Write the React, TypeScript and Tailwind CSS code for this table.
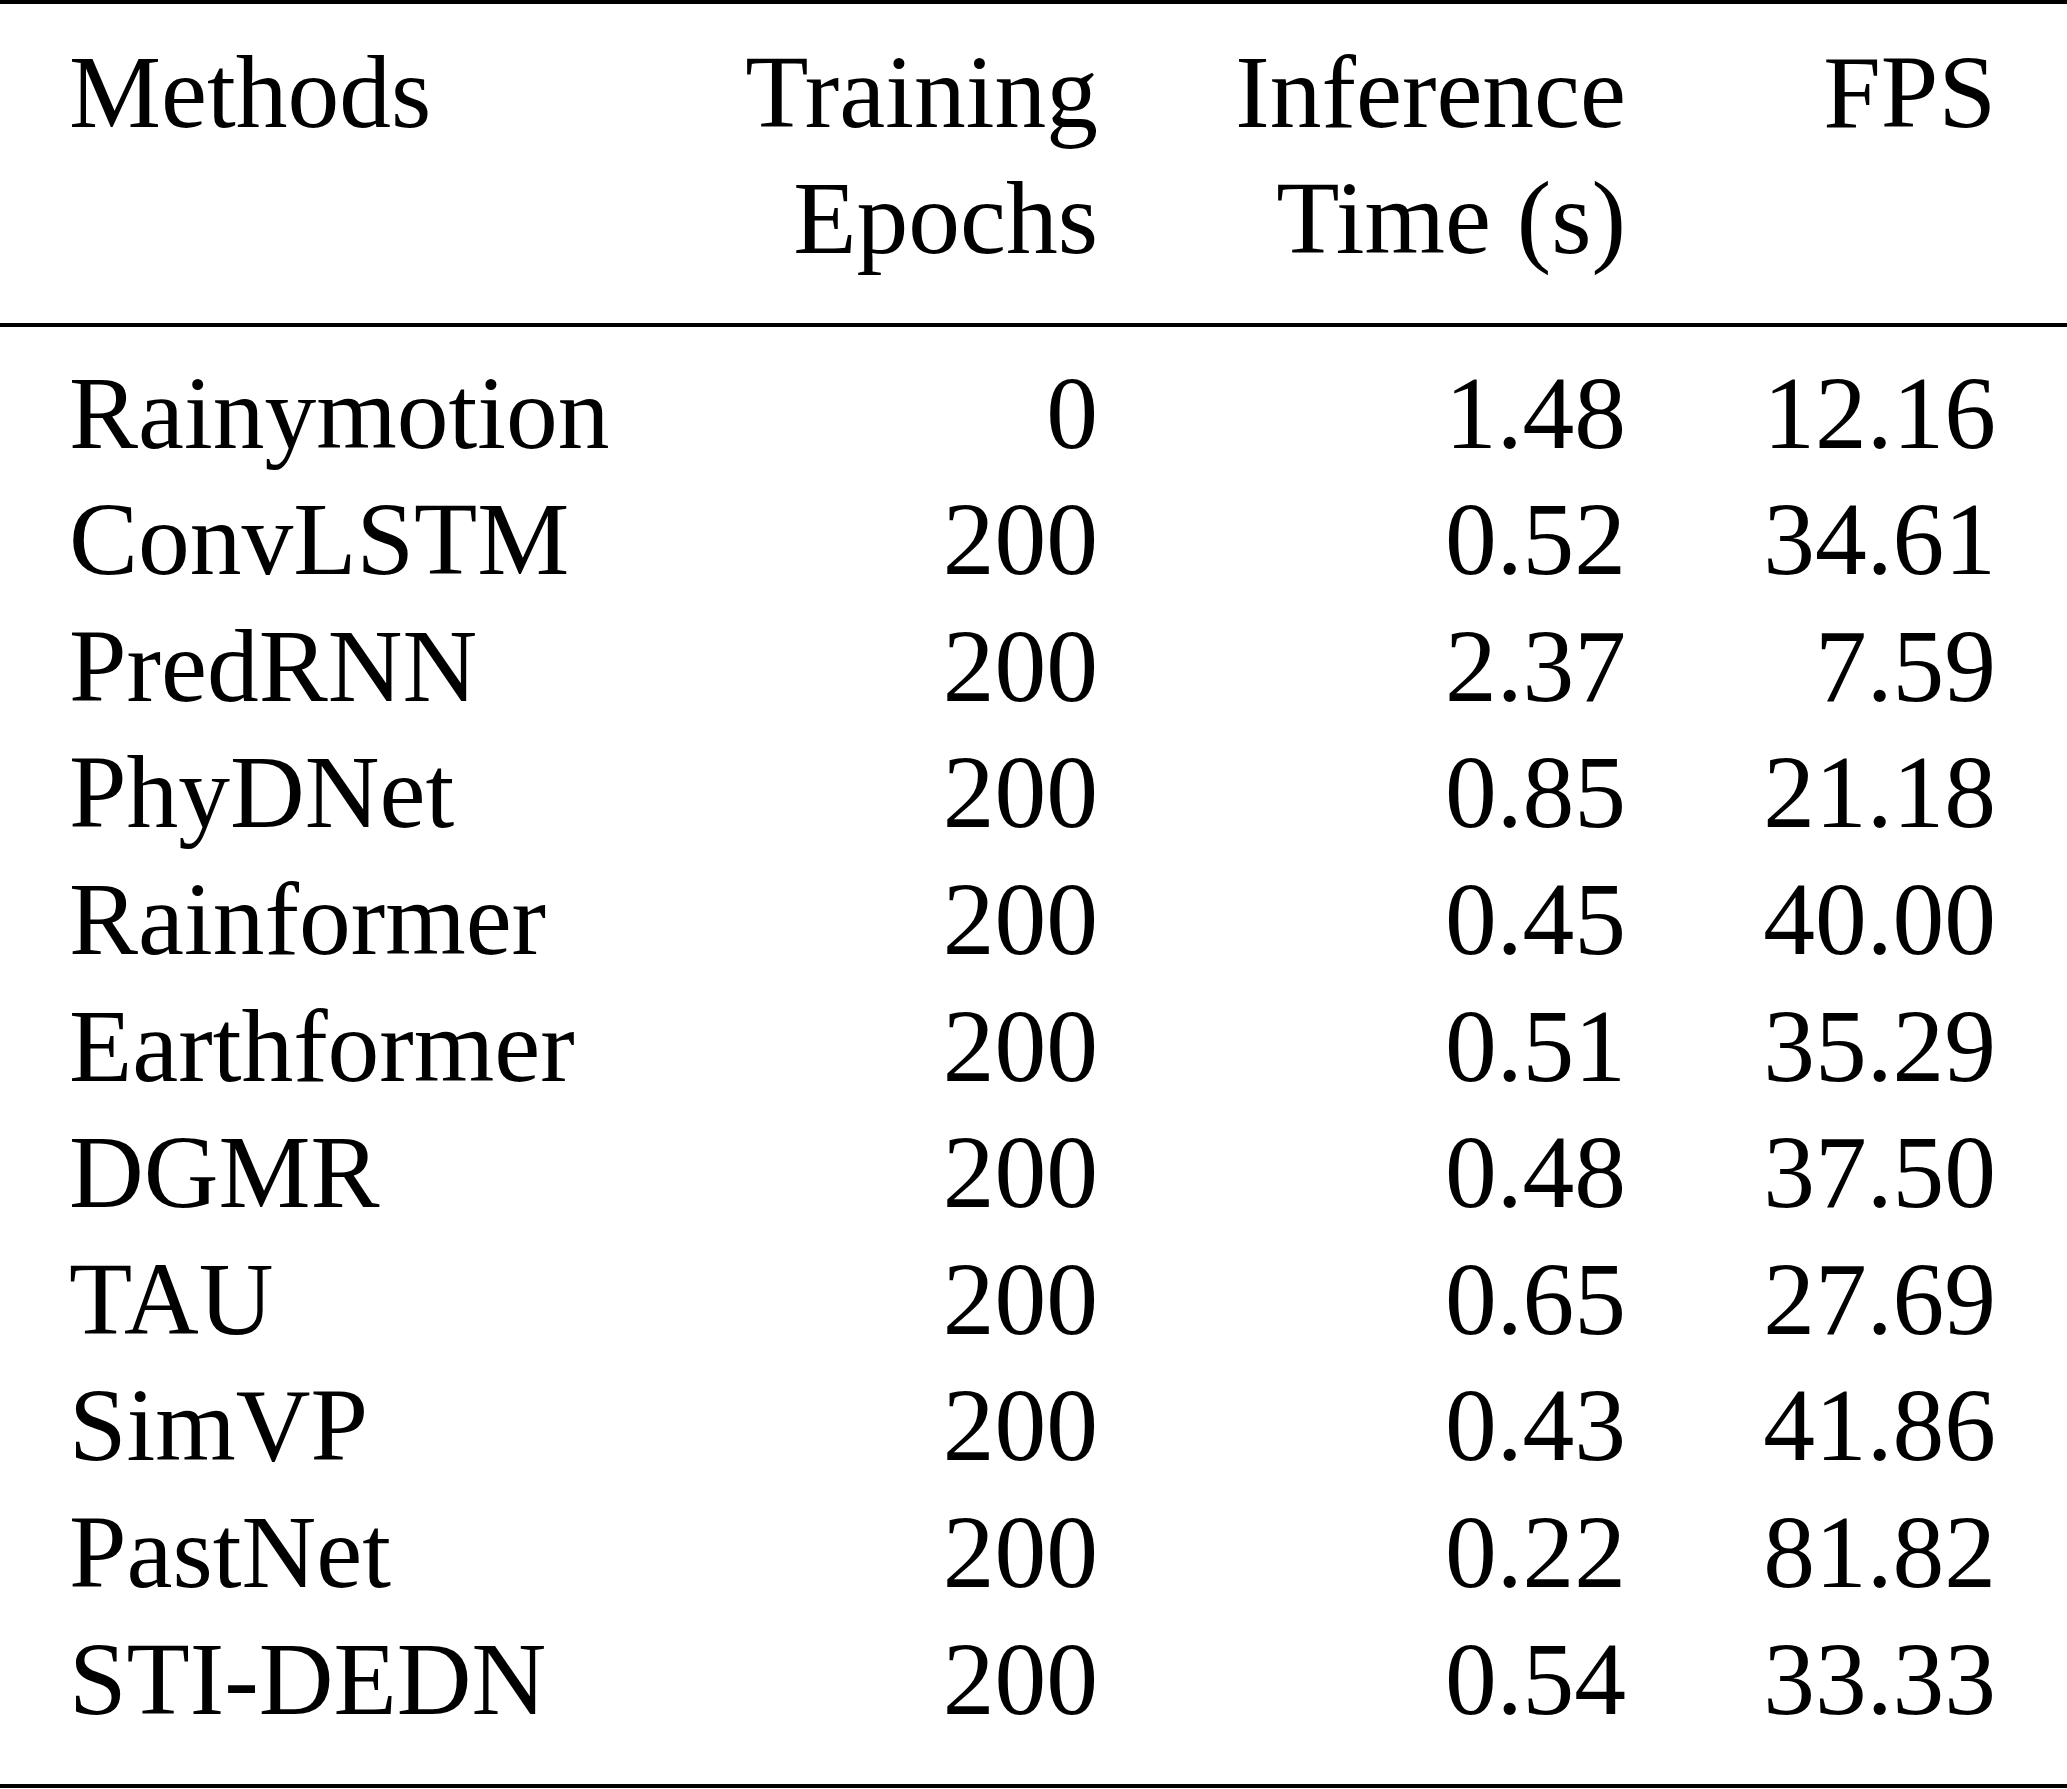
import React from "react";

const rows: [string, string, string, string][] = [
  ["Rainymotion", "0", "1.48", "12.16"],
  ["ConvLSTM", "200", "0.52", "34.61"],
  ["PredRNN", "200", "2.37", "7.59"],
  ["PhyDNet", "200", "0.85", "21.18"],
  ["Rainformer", "200", "0.45", "40.00"],
  ["Earthformer", "200", "0.51", "35.29"],
  ["DGMR", "200", "0.48", "37.50"],
  ["TAU", "200", "0.65", "27.69"],
  ["SimVP", "200", "0.43", "41.86"],
  ["PastNet", "200", "0.22", "81.82"],
  ["STI-DEDN", "200", "0.54", "33.33"],
];

const cols = "grid grid-cols-[600px_429px_528px_370px] pl-[69px]";

export default function App() {
  return (
    <div
      className="w-[2067px] h-[1789px] bg-white text-black text-[103.5px] leading-[126.6px]"
      style={{ fontFamily: '"Liberation Serif", "Times New Roman", serif' }}
    >
      <div className="h-[4px] bg-black" />
      <div className={`${cols} pt-[24.5px] pb-[41px]`}>
        <div>Methods</div>
        <div className="text-right">
          <div>Training</div>
          <div>Epochs</div>
        </div>
        <div className="text-right">
          <div>Inference</div>
          <div>Time (s)</div>
        </div>
        <div className="text-right">FPS</div>
      </div>
      <div className="h-[4px] bg-black" />
      <div className="pt-[23px] pb-[41.5px]">
        {rows.map((r) => (
          <div key={r[0]} className={cols}>
            <div>{r[0]}</div>
            <div className="text-right">{r[1]}</div>
            <div className="text-right">{r[2]}</div>
            <div className="text-right">{r[3]}</div>
          </div>
        ))}
      </div>
      <div className="h-[4px] bg-black" />
    </div>
  );
}
